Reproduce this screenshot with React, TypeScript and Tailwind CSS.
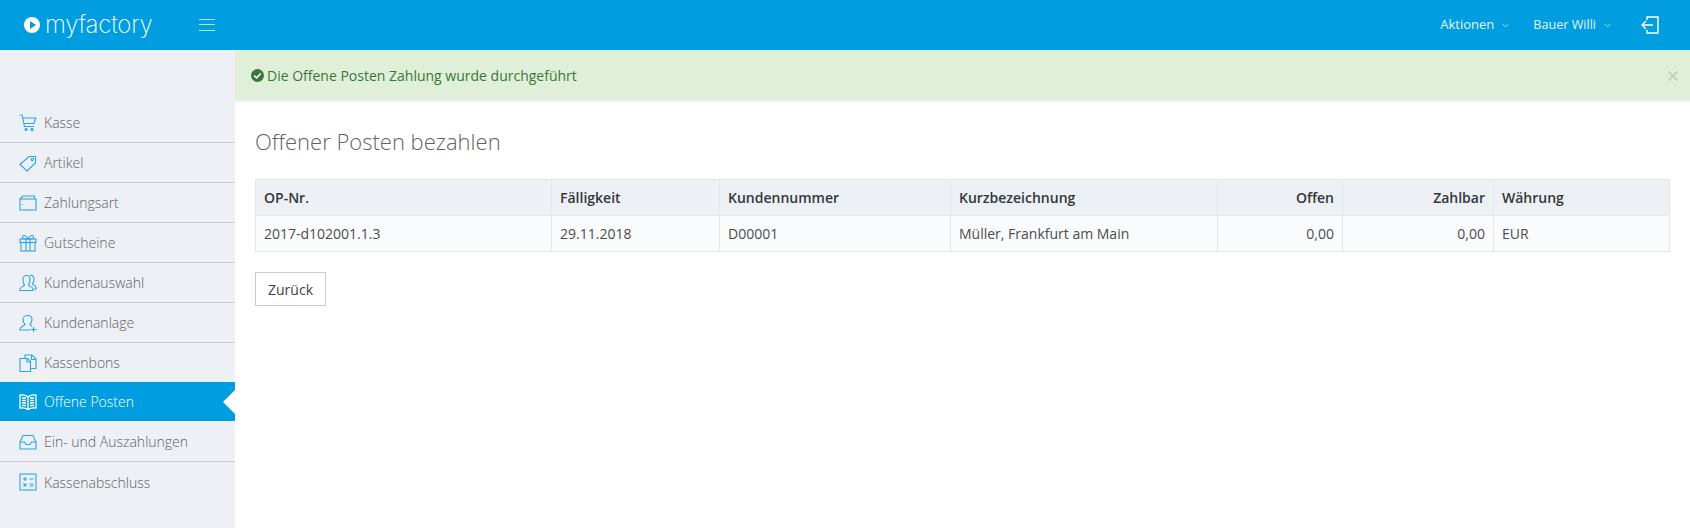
import { ChevronDown, X } from 'lucide-react'
import type { ReactNode } from 'react'

const stroke = { fill: 'none', stroke: 'currentColor', strokeWidth: 1.1 }

function Ico({ children }: { children: ReactNode }) {
  return (
    <svg viewBox="0 0 18 18" className="h-[18px] w-[18px] shrink-0" {...stroke}>
      {children}
    </svg>
  )
}

const navItems: { label: string; icon: ReactNode; active?: boolean }[] = [
  {
    label: 'Kasse',
    icon: (
      <Ico>
        <path d="M0.5 1h2.500l2.500 11.500h9.500" />
        <path d="M3.800 4h13l-1.800 5.500H5" />
        <circle cx="7" cy="15.500" r="1" fill="currentColor" />
        <circle cx="13" cy="15.500" r="1" fill="currentColor" />
      </Ico>
    ),
  },
  {
    label: 'Artikel',
    icon: (
      <Ico>
        <path d="M1 10.500 10 2.500h6.500v6.500l-8.500 8z" />
        <circle cx="13.300" cy="5.600" r="1.200" />
      </Ico>
    ),
  },
  {
    label: 'Zahlungsart',
    icon: (
      <Ico>
        <path d="M1 5l3-3h11.500v3" />
        <rect x="1" y="5" width="16" height="11" />
        <path d="M3 10.500h1" />
      </Ico>
    ),
  },
  {
    label: 'Gutscheine',
    icon: (
      <Ico>
        <rect x="1" y="5" width="16" height="3.500" />
        <rect x="2" y="8.500" width="14" height="8.500" />
        <path d="M7 5v12M11 5v12" />
        <path d="M9 5C7 1 3.500 0.500 3.500 3S6 5 9 5c3 0 5.500 .5 5.500-2S11 1 9 5z" />
      </Ico>
    ),
  },
  {
    label: 'Kundenauswahl',
    icon: (
      <Ico>
        <path d="M1 16.500v-1.500c0-2 4-2.500 4.500-4C4 9 4 7 4 5.500 4 3 5.500 1.500 7.500 1.500S11 3 11 5.500c0 1.500 0 3.500-1.500 5.500.5 1.500 4.500 2 4.500 4v1.500z" />
        <path d="M11 1.500c2-.5 4 .5 4 3.500 0 2-.5 3.500-1.500 5 .5 1 3.500 1.500 3.500 3.500v1.500h-2" />
      </Ico>
    ),
  },
  {
    label: 'Kundenanlage',
    icon: (
      <Ico>
        <path d="M11 16H1v-1c0-2 4-2.500 5-4.500C4.500 9 4 7 4 5.500 4 3 6 1.500 8.500 1.500S13 3 13 5.500c0 1.500-.5 3.500-2 5 .3.700 1 1.300 2 1.800" />
        <path d="M11.500 15.500h6M14.500 13v5" />
      </Ico>
    ),
  },
  {
    label: 'Kassenbons',
    icon: (
      <Ico>
        <path d="M1 4.500h7.500l3 3v10H1z" />
        <path d="M6 4.500V1h7l4 4v9.500h-5.500" />
        <path d="M12.500 1v4.500H17M8 4.500V8h3.500" />
      </Ico>
    ),
  },
  {
    label: 'Offene Posten',
    active: true,
    icon: (
      <svg viewBox="0 0 18 18" className="h-[18px] w-[18px] shrink-0" fill="none" stroke="currentColor" strokeWidth="1.300">
        <path d="M9 4C7 2 4 1.500 1 2v13c3-.5 6 0 8 1.500 2-1.500 5-2 8-1.500V2c-3-.5-6 0-8 2zM9 4v12.500" />
        <path d="M3 5h4M3 7.500h4M3 10h4M3 12.500h4M11 5h4M11 7.500h4M11 10h4M11 12.500h4" />
      </svg>
    ),
  },
  {
    label: 'Ein- und Auszahlungen',
    icon: (
      <Ico>
        <path d="M1 9 4 2.500h10L17 9v7H1z" />
        <path d="M1 9h4.500l1.500 2.500h4L12.500 9H17" />
      </Ico>
    ),
  },
  {
    label: 'Kassenabschluss',
    icon: (
      <Ico>
        <rect x="1" y="1" width="16" height="16" />
        <path d="M4 6h4M6 4v4M10.500 6h4M4.500 10.500l3 3M7.500 10.500l-3 3M10.500 11h4M10.500 13h4" />
      </Ico>
    ),
  },
]

const cols = [
  { title: 'OP-Nr.', value: '2017-d102001.1.3', width: 'w-[296px]' },
  { title: 'Fälligkeit', value: '29.11.2018', width: 'w-[168px]' },
  { title: 'Kundennummer', value: 'D00001', width: 'w-[231px]' },
  { title: 'Kurzbezeichnung', value: 'Müller, Frankfurt am Main', width: 'w-[267px]' },
  { title: 'Offen', value: '0,00', width: 'w-[125px]', right: true },
  { title: 'Zahlbar', value: '0,00', width: 'w-[151px]', right: true },
  { title: 'Währung', value: 'EUR', width: 'w-[176px]' },
]

function navRowClass(label: string, active?: boolean) {
  if (active) return 'relative flex h-[40px] items-center gap-[7px] border-b border-[#edf0f5] bg-[#009de0] pl-[19px] text-white'
  if (label === 'Kassenbons') return 'flex h-[39px] items-center gap-[7px] pl-[19px] text-[#606367]'
  return 'flex h-[40px] items-center gap-[7px] border-b border-[#c9cdd1] pl-[19px] text-[#606367] last:border-b-0'
}

function Sidebar() {
  return (
    <aside className="w-[235px] shrink-0 bg-[#edf0f5] pt-[53px]">
      <ul>
        {navItems.map((item) => (
          <li key={item.label} className={navRowClass(item.label, item.active)}>
            <span className={item.active ? 'text-white' : 'text-[#2aa5e6]'}>{item.icon}</span>
            <span className="text-[14px] font-light">{item.label}</span>
            {item.active && (
              <span className="absolute right-0 top-1/2 h-0 w-0 -translate-y-1/2 border-y-[12px] border-r-[12px] border-y-transparent border-r-white" />
            )}
          </li>
        ))}
      </ul>
    </aside>
  )
}

export default function App() {
  return (
    <div className="flex h-[528px] flex-col overflow-hidden bg-white font-['Open_Sans',sans-serif] text-[14px] text-[#4a4d50]">
      <header className="flex h-[50px] shrink-0 items-center bg-[#009de0] text-white">
        <div className="flex w-[199px] items-center pl-[24px]">
          <svg viewBox="0 0 16 16" className="mr-[5px] h-[16px] w-[16px]">
            <circle cx="8" cy="8" r="8" fill="white" />
            <path d="M6 4l6 4-6 4z" fill="#009de0" />
          </svg>
          <span className="font-['Inter',sans-serif] text-[24px] leading-none font-extralight tracking-[-0.2px]">
            myfactory
          </span>
        </div>
        <svg viewBox="0 0 16 12" className="h-[12px] w-[16px]" stroke="#b5e2f7" strokeWidth="1">
          <path d="M0 .5h16M0 5.500h16M0 11.500h16" />
        </svg>
        <div className="ml-auto flex items-center">
          <span className="text-[13px] text-[#e3f5fd]">Aktionen</span>
          <ChevronDown className="ml-[6px] h-[11px] w-[11px] text-[#a8dcf4]" />
          <span className="ml-[22px] text-[12.6px] text-[#e3f5fd]">Bauer Willi</span>
          <ChevronDown className="ml-[6px] h-[11px] w-[11px] text-[#a8dcf4]" />
          <svg viewBox="0 0 18 18" className="mr-[31px] ml-[28px] h-[18px] w-[18px]" fill="none" stroke="white" strokeWidth="1.400">
            <path d="M6 4V1h11v16H6v-3" />
            <path d="M12 9H1M5 5 1 9l4 4" />
          </svg>
        </div>
      </header>

      <div className="flex min-h-0 flex-1">
        <Sidebar />
        <main className="min-w-0 flex-1">
          <div className="flex h-[52px] items-center justify-between border-b-2 border-[#eef0ee] bg-[#e0efd8] pt-[1px] pr-[9px] pl-[16px] text-[#3c763d]">
            <div className="flex items-center gap-[3px]">
              <svg viewBox="0 0 14 14" className="h-[13px] w-[13px]">
                <circle cx="7" cy="7" r="7" fill="#3c763d" />
                <path d="M3.500 7.200 6 9.600l4.500-4.800" fill="none" stroke="white" strokeWidth="1.800" />
              </svg>
              <span>Die Offene Posten Zahlung wurde durchgeführt</span>
            </div>
            <X className="h-[16px] w-[16px] text-[#c2d3bc]" strokeWidth={3} />
          </div>

          <div className="px-[20px]">
            <h1 className="mt-[25px] text-[22px] leading-[28px] font-light text-[#5f6367]">Offener Posten bezahlen</h1>

            <table className="mt-[24px] w-[1414px] table-fixed border-collapse">
              <thead>
                <tr className="bg-[#edf0f5]">
                  {cols.map((c) => (
                    <th
                      key={c.title}
                      className={`${c.width} h-[36px] border border-[#e3e6ea] px-[8px] font-semibold text-[#33373b] ${c.right ? 'text-right' : 'text-left'}`}
                    >
                      {c.title}
                    </th>
                  ))}
                </tr>
              </thead>
              <tbody>
                <tr className="bg-[#fafbfd]">
                  {cols.map((c) => (
                    <td
                      key={c.title}
                      className={`h-[36px] border border-[#e3e6ea] px-[8px] text-[#4a4d50] ${c.right ? 'text-right' : 'text-left'}`}
                    >
                      {c.value}
                    </td>
                  ))}
                </tr>
              </tbody>
            </table>

            <button className="mt-[20px] h-[34px] w-[71px] border border-[#c9cbcd] bg-white text-[#3f4245]">Zurück</button>
          </div>
        </main>
      </div>
    </div>
  )
}
